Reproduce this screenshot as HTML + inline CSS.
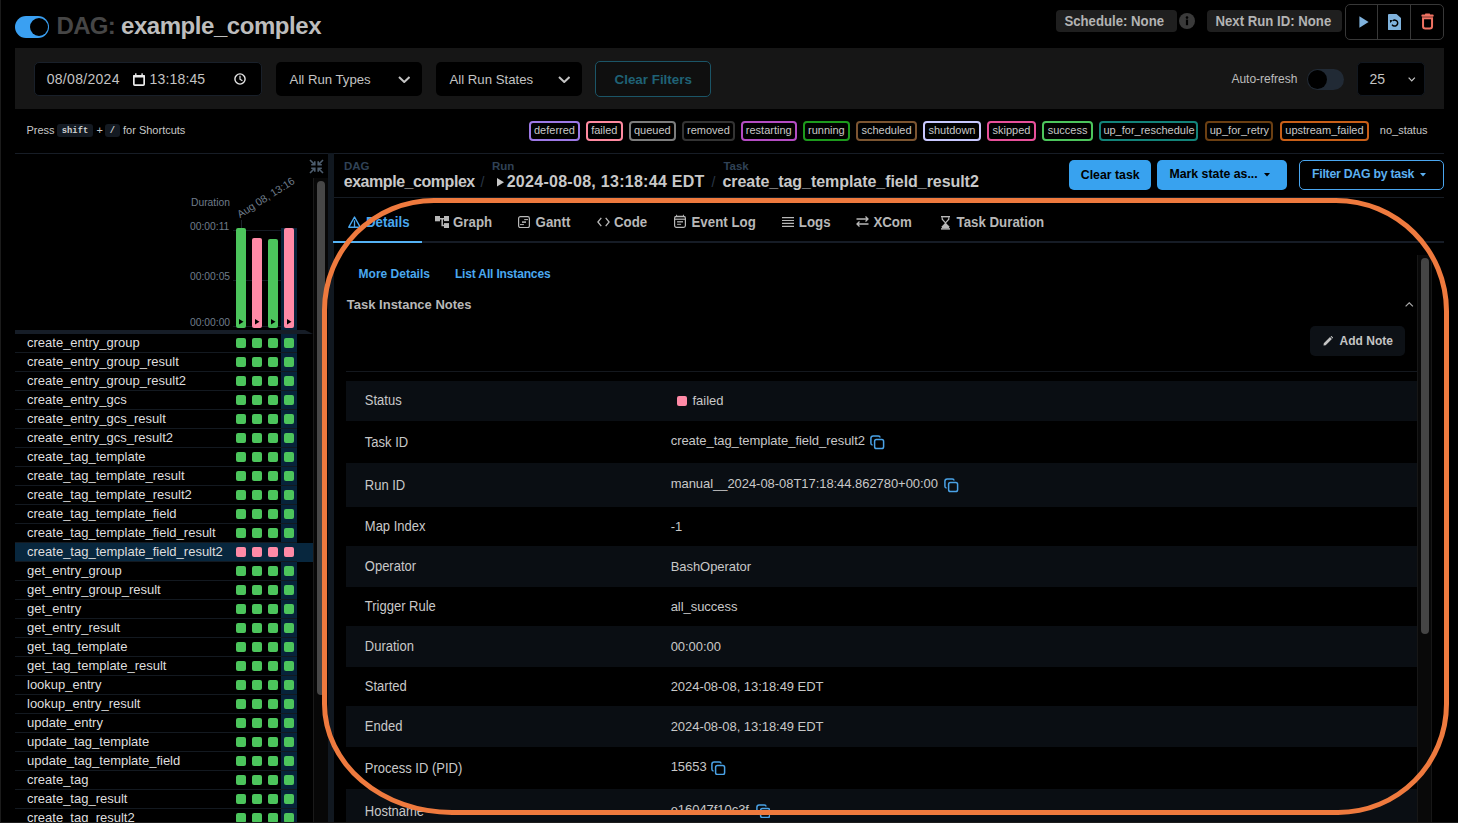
<!DOCTYPE html>
<html><head><meta charset="utf-8"><title>DAG: example_complex</title>
<style>
html,body{margin:0;padding:0;background:#000;width:1458px;height:823px;overflow:hidden;}
body{position:relative;font-family:"Liberation Sans", sans-serif;}
.t{position:absolute;white-space:nowrap;font-family:"Liberation Sans", sans-serif;}
.r{position:absolute;}
.badge{box-sizing:border-box;border:2px solid;border-radius:4px;font-size:11px;line-height:14.5px;color:#c8c8c8;text-align:center;white-space:nowrap;font-family:"Liberation Sans", sans-serif;}
</style></head><body>
<div class="r" style="left:0px;top:0px;width:1px;height:823px;background:#1b1b1b;"></div>
<div class="r" style="left:15px;top:16px;width:34px;height:22px;background:#3aa0f2;border-radius:11px;"></div>
<div class="r" style="left:29.8px;top:17.8px;width:18.4px;height:18.4px;background:#000;border-radius:50%;"></div>
<div class="t" style="left:56.5px;top:14.08px;font-size:24px;line-height:24px;color:#464646;font-weight:700;letter-spacing:-0.7px;">DAG:</div>
<div class="t" style="left:121px;top:14.08px;font-size:24px;line-height:24px;color:#bdbdbd;font-weight:700;letter-spacing:-0.45px;">example_complex</div>
<div class="r" style="left:1056px;top:10px;width:121px;height:21.5px;background:#1f1f1f;border-radius:4px;"></div>
<div class="t" style="left:1064.4px;top:15.13px;font-size:13.2px;line-height:13.2px;color:#b3b3b3;font-weight:700;letter-spacing:0px;transform-origin:0 11.17px;transform:scaleY(1.1);">Schedule: None</div>
<div class="r" style="left:1179px;top:13px;width:16px;height:16px;background:#3a3a3a;border-radius:50%;"></div>
<svg class="r" style="left:1179px;top:13px" width="16" height="16" viewBox="0 0 16 16"><circle cx="8" cy="4.6" r="1.3" fill="#000"/><rect x="6.9" y="6.6" width="2.2" height="5.6" fill="#000"/></svg>
<div class="r" style="left:1207px;top:10px;width:135px;height:21.5px;background:#1f1f1f;border-radius:4px;"></div>
<div class="t" style="left:1215.5px;top:15.13px;font-size:13.2px;line-height:13.2px;color:#b3b3b3;font-weight:700;letter-spacing:0px;transform-origin:0 11.17px;transform:scaleY(1.1);">Next Run ID: None</div>
<div class="r" style="left:1345px;top:4px;width:99px;height:35.5px;background:transparent;border:1px solid #383838;border-radius:5px;box-sizing:border-box;"></div>
<div class="r" style="left:1377px;top:4px;width:1px;height:35.5px;background:#383838;"></div>
<div class="r" style="left:1410px;top:4px;width:1px;height:35.5px;background:#383838;"></div>
<svg class="r" style="left:1358.5px;top:16px" width="11" height="12" viewBox="0 0 11 12"><path d="M0.4 0.2 L9.6 6 L0.4 11.8 Z" fill="#7fb2dc"/></svg>
<svg class="r" style="left:1387.9px;top:13.7px" width="13.2" height="16.4" viewBox="0 0 13.2 16.4"><path d="M1 0 H8.5 L13.1 4.2 V15.3 Q13.1 16.3 12.1 16.3 H1 Q0 16.3 0 15.3 V1 Q0 0 1 0 Z" fill="#7fb2dc"/><path d="M4.98 6.64 A3 3 0 1 1 4.1 10.6" fill="none" stroke="#000" stroke-width="1.5"/><path d="M1.9 6.1 L5.0 6.3 L2.2 9.0 Z" fill="#000"/></svg>
<svg class="r" style="left:1421px;top:12.8px" width="13" height="17" viewBox="0 0 13 17"><rect x="0.4" y="1.6" width="12.3" height="2.1" rx="1" fill="#f07262"/><rect x="4" y="0.6" width="5.1" height="1.8" rx="0.7" fill="#f07262"/><path d="M2.05 5.35 H11.05 V13.2 Q11.05 15.5 8.8 15.5 H4.3 Q2.05 15.5 2.05 13.2 Z" fill="none" stroke="#f07262" stroke-width="2"/></svg>
<div class="r" style="left:15px;top:48px;width:1429px;height:61px;background:#161616;"></div>
<div class="r" style="left:34px;top:62px;width:228px;height:34px;background:#000;border:1px solid #19202a;border-radius:5px;box-sizing:border-box;"></div>
<div class="t" style="left:46.7px;top:72.35px;font-size:14px;line-height:14px;color:#c4c4c4;font-weight:400;letter-spacing:0.3px;">08/08/2024</div>
<svg class="r" style="left:133px;top:73px" width="12" height="13" viewBox="0 0 12 13"><rect x="0.85" y="2.85" width="10.3" height="9.3" rx="0.9" fill="none" stroke="#ececec" stroke-width="1.7"/><rect x="0.1" y="2.1" width="11.8" height="2.3" rx="0.5" fill="#ececec"/><rect x="2.1" y="0.3" width="1.4" height="2.2" fill="#ececec"/><rect x="8.4" y="0.3" width="1.4" height="2.2" fill="#ececec"/></svg>
<div class="t" style="left:149.6px;top:72.35px;font-size:14px;line-height:14px;color:#c4c4c4;font-weight:400;letter-spacing:0.15px;">13:18:45</div>
<svg class="r" style="left:234px;top:73px" width="12" height="12" viewBox="0 0 12 12"><circle cx="6" cy="6" r="5.1" fill="none" stroke="#e6e6e6" stroke-width="1.4"/><path d="M6 2.8 V6.2 L8.4 7.8" fill="none" stroke="#e6e6e6" stroke-width="1.2"/></svg>
<div class="r" style="left:276px;top:62px;width:146px;height:34px;background:#000;border-radius:5px;"></div>
<div class="t" style="left:289.6px;top:72.83px;font-size:13.2px;line-height:13.2px;color:#c4c4c4;font-weight:400;letter-spacing:0px;">All Run Types</div>
<svg class="r" style="left:397.5px;top:75.5px" width="12.5" height="7" viewBox="0 0 12.5 7"><path d="M1.0 1.0 L6.25 6.0 L11.5 1.0" fill="none" stroke="#c4c4c4" stroke-width="2"/></svg>
<div class="r" style="left:436px;top:62px;width:146px;height:34px;background:#000;border-radius:5px;"></div>
<div class="t" style="left:449.5px;top:72.83px;font-size:13.2px;line-height:13.2px;color:#c4c4c4;font-weight:400;letter-spacing:0px;">All Run States</div>
<svg class="r" style="left:557.7px;top:75.5px" width="12.5" height="7" viewBox="0 0 12.5 7"><path d="M1.0 1.0 L6.25 6.0 L11.5 1.0" fill="none" stroke="#c4c4c4" stroke-width="2"/></svg>
<div class="r" style="left:595px;top:61px;width:116px;height:36px;background:#0f0f0f;border:1px solid #1b5567;border-radius:5px;box-sizing:border-box;"></div>
<div class="t" style="left:614.5px;top:72.96px;font-size:13.4px;line-height:13.4px;color:#1f6276;font-weight:700;letter-spacing:0px;">Clear Filters</div>
<div class="t" style="left:1231.4px;top:72.94px;font-size:12px;line-height:12px;color:#bdbdbd;font-weight:400;letter-spacing:0px;">Auto-refresh</div>
<div class="r" style="left:1307px;top:69px;width:37px;height:21px;background:#212a35;border-radius:10.5px;"></div>
<div class="r" style="left:1308px;top:70px;width:19px;height:19px;background:#000;border-radius:50%;"></div>
<div class="r" style="left:1357px;top:62px;width:68px;height:34px;background:#000;border:1px solid #121820;border-radius:5px;box-sizing:border-box;"></div>
<div class="t" style="left:1369.5px;top:72.35px;font-size:14px;line-height:14px;color:#c4c4c4;font-weight:400;letter-spacing:0px;">25</div>
<svg class="r" style="left:1408px;top:77px" width="7.5" height="4.5" viewBox="0 0 7.5 4.5"><path d="M0.65 0.65 L3.75 3.85 L6.85 0.65" fill="none" stroke="#c4c4c4" stroke-width="1.3"/></svg>
<div class="t" style="left:26.4px;top:124.69px;font-size:11px;line-height:11px;color:#c8c8c8;font-weight:400;letter-spacing:0px;">Press</div>
<div class="r" style="left:57.3px;top:124.2px;width:35.3px;height:13.3px;background:#141a22;border-radius:3px;"></div>
<div class="t" style="left:61.8px;top:126.75px;font-size:8.8px;line-height:8.8px;color:#d0d0d0;font-weight:700;letter-spacing:0px;font-family:'Liberation Mono',monospace;">shift</div>
<div class="t" style="left:96.5px;top:124.69px;font-size:11px;line-height:11px;color:#c8c8c8;font-weight:400;letter-spacing:0px;">+</div>
<div class="r" style="left:105px;top:124.2px;width:14.7px;height:13.3px;background:#141a22;border-radius:3px;"></div>
<div class="t" style="left:109.7px;top:126.75px;font-size:8.8px;line-height:8.8px;color:#d0d0d0;font-weight:700;letter-spacing:0px;font-family:'Liberation Mono',monospace;">/</div>
<div class="t" style="left:123px;top:124.69px;font-size:11px;line-height:11px;color:#c8c8c8;font-weight:400;letter-spacing:0px;">for Shortcuts</div>
<div class="r badge" style="left:529px;top:121px;width:51.0px;height:20px;border-color:#9d79e6;">deferred</div>
<div class="r badge" style="left:586px;top:121px;width:36.7px;height:20px;border-color:#ff8aa0;">failed</div>
<div class="r badge" style="left:628.9px;top:121px;width:46.9px;height:20px;border-color:#7c7c7c;">queued</div>
<div class="r badge" style="left:682.2px;top:121px;width:52.4px;height:20px;border-color:#333;">removed</div>
<div class="r badge" style="left:741px;top:121px;width:55.5px;height:20px;border-color:#b44cc2;">restarting</div>
<div class="r badge" style="left:803.2px;top:121px;width:46.4px;height:20px;border-color:#1d9a1d;">running</div>
<div class="r badge" style="left:856.2px;top:121px;width:60.7px;height:20px;border-color:#7c5531;">scheduled</div>
<div class="r badge" style="left:923px;top:121px;width:57.9px;height:20px;border-color:#c8c8ff;">shutdown</div>
<div class="r badge" style="left:987.2px;top:121px;width:48.6px;height:20px;border-color:#e8509a;">skipped</div>
<div class="r badge" style="left:1042.4px;top:121px;width:50.4px;height:20px;border-color:#4cc55c;">success</div>
<div class="r badge" style="left:1099.4px;top:121px;width:99.1px;height:20px;border-color:#138379;">up_for_reschedule</div>
<div class="r badge" style="left:1205.3px;top:121px;width:68.2px;height:20px;border-color:#6b3f12;">up_for_retry</div>
<div class="r badge" style="left:1280.3px;top:121px;width:88.3px;height:20px;border-color:#c95f18;">upstream_failed</div>
<div class="t" style="left:1379.8px;top:124.69px;font-size:11px;line-height:11px;color:#c8c8c8;font-weight:400;letter-spacing:0px;">no_status</div>
<div class="r" style="left:15px;top:153px;width:1429px;height:1px;background:#171d26;"></div>
<svg class="r" style="left:309px;top:159px" width="15" height="15" viewBox="0 0 15 15"><g fill="none" stroke="#4d5d6e" stroke-width="1.6"><path d="M1 1 L5.6 5.6 M5.8 2.2 V5.8 H2.2"/><path d="M14 1 L9.4 5.6 M9.2 2.2 V5.8 H12.8"/><path d="M1 14 L5.6 9.4 M5.8 12.8 V9.2 H2.2"/><path d="M14 14 L9.4 9.4 M9.2 12.8 V9.2 H12.8"/></g></svg>
<div class="r" style="left:313px;top:178px;width:14.6px;height:645px;background:#070707;border-left:1px solid #1a1a1a;box-sizing:border-box;"></div>
<div class="r" style="left:317px;top:181px;width:8px;height:514px;background:#474747;border-radius:4px;"></div>
<div class="r" style="left:327.5px;top:153px;width:6.5px;height:670px;background:#111820;"></div>
<div class="t" style="left:191px;top:198.28px;font-size:10.3px;line-height:10.3px;color:#6f7c8a;font-weight:400;letter-spacing:0px;">Duration</div>
<div class="t" style="left:190px;top:222.38px;font-size:10.3px;line-height:10.3px;color:#6f7c8a;font-weight:400;letter-spacing:0px;">00:00:11</div>
<div class="t" style="left:190px;top:272.48px;font-size:10.3px;line-height:10.3px;color:#6f7c8a;font-weight:400;letter-spacing:0px;">00:00:05</div>
<div class="t" style="left:190px;top:318.18px;font-size:10.3px;line-height:10.3px;color:#6f7c8a;font-weight:400;letter-spacing:0px;">00:00:00</div>
<div class="r" style="left:233px;top:229.5px;width:64px;height:1px;background:#151b23;"></div>
<div class="r" style="left:233px;top:279.5px;width:64px;height:1px;background:#151b23;"></div>
<div class="r" style="left:233px;top:325.5px;width:64px;height:1px;background:#151b23;"></div>
<div class="r" style="left:241px;top:220px;width:1px;height:8px;background:#1c232c;"></div>
<div class="t" style="left:240.5px;top:208.5px;font-size:10.6px;line-height:11px;color:#6f7c8a;transform-origin:0 100%;transform:rotate(-32.5deg);">Aug 08, 13:16</div>
<div class="r" style="left:281px;top:227.8px;width:16px;height:600px;background:#07233a;"></div>
<div class="r" style="left:236px;top:228.2px;width:10px;height:99.69999999999999px;background:#4cc55c;border-radius:2px;"></div>
<svg class="r" style="left:239.2px;top:319.3px" width="4.5" height="5.5" viewBox="0 0 4.5 5.5"><path d="M0 0 L4.5 2.75 L0 5.5 Z" fill="#000"/></svg>
<div class="r" style="left:252px;top:237.8px;width:10px;height:90.09999999999997px;background:#ff8aa6;border-radius:2px;"></div>
<svg class="r" style="left:255.2px;top:319.3px" width="4.5" height="5.5" viewBox="0 0 4.5 5.5"><path d="M0 0 L4.5 2.75 L0 5.5 Z" fill="#000"/></svg>
<div class="r" style="left:268px;top:239.2px;width:10px;height:88.69999999999999px;background:#4cc55c;border-radius:2px;"></div>
<svg class="r" style="left:271.2px;top:319.3px" width="4.5" height="5.5" viewBox="0 0 4.5 5.5"><path d="M0 0 L4.5 2.75 L0 5.5 Z" fill="#000"/></svg>
<div class="r" style="left:284px;top:228.2px;width:10px;height:99.69999999999999px;background:#ff8aa6;border-radius:2px;"></div>
<svg class="r" style="left:287.2px;top:319.3px" width="4.5" height="5.5" viewBox="0 0 4.5 5.5"><path d="M0 0 L4.5 2.75 L0 5.5 Z" fill="#000"/></svg>
<div class="r" style="left:15px;top:330px;width:290px;height:4px;background:#161d27;"></div>
<svg class="r" style="left:305px;top:330px" width="8" height="4" viewBox="0 0 8 4"><path d="M0 0 L0 4 L8 4 Z" fill="#161d27"/></svg>
<div class="r" style="left:15px;top:352.3px;width:282px;height:1px;background:#131920;"></div>
<div class="t" style="left:27px;top:335.70px;font-size:13px;line-height:13px;color:#dedede;font-weight:400;letter-spacing:0px;">create_entry_group</div>
<div class="r" style="left:236px;top:338px;width:10px;height:10px;background:#4cc55c;border-radius:2px;"></div>
<div class="r" style="left:252px;top:338px;width:10px;height:10px;background:#4cc55c;border-radius:2px;"></div>
<div class="r" style="left:268px;top:338px;width:10px;height:10px;background:#4cc55c;border-radius:2px;"></div>
<div class="r" style="left:284px;top:338px;width:10px;height:10px;background:#4cc55c;border-radius:2px;"></div>
<div class="r" style="left:15px;top:371.3px;width:282px;height:1px;background:#131920;"></div>
<div class="t" style="left:27px;top:354.70px;font-size:13px;line-height:13px;color:#dedede;font-weight:400;letter-spacing:0px;">create_entry_group_result</div>
<div class="r" style="left:236px;top:357px;width:10px;height:10px;background:#4cc55c;border-radius:2px;"></div>
<div class="r" style="left:252px;top:357px;width:10px;height:10px;background:#4cc55c;border-radius:2px;"></div>
<div class="r" style="left:268px;top:357px;width:10px;height:10px;background:#4cc55c;border-radius:2px;"></div>
<div class="r" style="left:284px;top:357px;width:10px;height:10px;background:#4cc55c;border-radius:2px;"></div>
<div class="r" style="left:15px;top:390.3px;width:282px;height:1px;background:#131920;"></div>
<div class="t" style="left:27px;top:373.70px;font-size:13px;line-height:13px;color:#dedede;font-weight:400;letter-spacing:0px;">create_entry_group_result2</div>
<div class="r" style="left:236px;top:376px;width:10px;height:10px;background:#4cc55c;border-radius:2px;"></div>
<div class="r" style="left:252px;top:376px;width:10px;height:10px;background:#4cc55c;border-radius:2px;"></div>
<div class="r" style="left:268px;top:376px;width:10px;height:10px;background:#4cc55c;border-radius:2px;"></div>
<div class="r" style="left:284px;top:376px;width:10px;height:10px;background:#4cc55c;border-radius:2px;"></div>
<div class="r" style="left:15px;top:409.3px;width:282px;height:1px;background:#131920;"></div>
<div class="t" style="left:27px;top:392.70px;font-size:13px;line-height:13px;color:#dedede;font-weight:400;letter-spacing:0px;">create_entry_gcs</div>
<div class="r" style="left:236px;top:395px;width:10px;height:10px;background:#4cc55c;border-radius:2px;"></div>
<div class="r" style="left:252px;top:395px;width:10px;height:10px;background:#4cc55c;border-radius:2px;"></div>
<div class="r" style="left:268px;top:395px;width:10px;height:10px;background:#4cc55c;border-radius:2px;"></div>
<div class="r" style="left:284px;top:395px;width:10px;height:10px;background:#4cc55c;border-radius:2px;"></div>
<div class="r" style="left:15px;top:428.3px;width:282px;height:1px;background:#131920;"></div>
<div class="t" style="left:27px;top:411.70px;font-size:13px;line-height:13px;color:#dedede;font-weight:400;letter-spacing:0px;">create_entry_gcs_result</div>
<div class="r" style="left:236px;top:414px;width:10px;height:10px;background:#4cc55c;border-radius:2px;"></div>
<div class="r" style="left:252px;top:414px;width:10px;height:10px;background:#4cc55c;border-radius:2px;"></div>
<div class="r" style="left:268px;top:414px;width:10px;height:10px;background:#4cc55c;border-radius:2px;"></div>
<div class="r" style="left:284px;top:414px;width:10px;height:10px;background:#4cc55c;border-radius:2px;"></div>
<div class="r" style="left:15px;top:447.3px;width:282px;height:1px;background:#131920;"></div>
<div class="t" style="left:27px;top:430.70px;font-size:13px;line-height:13px;color:#dedede;font-weight:400;letter-spacing:0px;">create_entry_gcs_result2</div>
<div class="r" style="left:236px;top:433px;width:10px;height:10px;background:#4cc55c;border-radius:2px;"></div>
<div class="r" style="left:252px;top:433px;width:10px;height:10px;background:#4cc55c;border-radius:2px;"></div>
<div class="r" style="left:268px;top:433px;width:10px;height:10px;background:#4cc55c;border-radius:2px;"></div>
<div class="r" style="left:284px;top:433px;width:10px;height:10px;background:#4cc55c;border-radius:2px;"></div>
<div class="r" style="left:15px;top:466.3px;width:282px;height:1px;background:#131920;"></div>
<div class="t" style="left:27px;top:449.70px;font-size:13px;line-height:13px;color:#dedede;font-weight:400;letter-spacing:0px;">create_tag_template</div>
<div class="r" style="left:236px;top:452px;width:10px;height:10px;background:#4cc55c;border-radius:2px;"></div>
<div class="r" style="left:252px;top:452px;width:10px;height:10px;background:#4cc55c;border-radius:2px;"></div>
<div class="r" style="left:268px;top:452px;width:10px;height:10px;background:#4cc55c;border-radius:2px;"></div>
<div class="r" style="left:284px;top:452px;width:10px;height:10px;background:#4cc55c;border-radius:2px;"></div>
<div class="r" style="left:15px;top:485.3px;width:282px;height:1px;background:#131920;"></div>
<div class="t" style="left:27px;top:468.70px;font-size:13px;line-height:13px;color:#dedede;font-weight:400;letter-spacing:0px;">create_tag_template_result</div>
<div class="r" style="left:236px;top:471px;width:10px;height:10px;background:#4cc55c;border-radius:2px;"></div>
<div class="r" style="left:252px;top:471px;width:10px;height:10px;background:#4cc55c;border-radius:2px;"></div>
<div class="r" style="left:268px;top:471px;width:10px;height:10px;background:#4cc55c;border-radius:2px;"></div>
<div class="r" style="left:284px;top:471px;width:10px;height:10px;background:#4cc55c;border-radius:2px;"></div>
<div class="r" style="left:15px;top:504.3px;width:282px;height:1px;background:#131920;"></div>
<div class="t" style="left:27px;top:487.70px;font-size:13px;line-height:13px;color:#dedede;font-weight:400;letter-spacing:0px;">create_tag_template_result2</div>
<div class="r" style="left:236px;top:490px;width:10px;height:10px;background:#4cc55c;border-radius:2px;"></div>
<div class="r" style="left:252px;top:490px;width:10px;height:10px;background:#4cc55c;border-radius:2px;"></div>
<div class="r" style="left:268px;top:490px;width:10px;height:10px;background:#4cc55c;border-radius:2px;"></div>
<div class="r" style="left:284px;top:490px;width:10px;height:10px;background:#4cc55c;border-radius:2px;"></div>
<div class="r" style="left:15px;top:523.3px;width:282px;height:1px;background:#131920;"></div>
<div class="t" style="left:27px;top:506.70px;font-size:13px;line-height:13px;color:#dedede;font-weight:400;letter-spacing:0px;">create_tag_template_field</div>
<div class="r" style="left:236px;top:509px;width:10px;height:10px;background:#4cc55c;border-radius:2px;"></div>
<div class="r" style="left:252px;top:509px;width:10px;height:10px;background:#4cc55c;border-radius:2px;"></div>
<div class="r" style="left:268px;top:509px;width:10px;height:10px;background:#4cc55c;border-radius:2px;"></div>
<div class="r" style="left:284px;top:509px;width:10px;height:10px;background:#4cc55c;border-radius:2px;"></div>
<div class="r" style="left:15px;top:542.3px;width:282px;height:1px;background:#131920;"></div>
<div class="t" style="left:27px;top:525.70px;font-size:13px;line-height:13px;color:#dedede;font-weight:400;letter-spacing:0px;">create_tag_template_field_result</div>
<div class="r" style="left:236px;top:528px;width:10px;height:10px;background:#4cc55c;border-radius:2px;"></div>
<div class="r" style="left:252px;top:528px;width:10px;height:10px;background:#4cc55c;border-radius:2px;"></div>
<div class="r" style="left:268px;top:528px;width:10px;height:10px;background:#4cc55c;border-radius:2px;"></div>
<div class="r" style="left:284px;top:528px;width:10px;height:10px;background:#4cc55c;border-radius:2px;"></div>
<div class="r" style="left:15px;top:543.0px;width:298px;height:18.5px;background:#08273e;"></div>
<div class="r" style="left:15px;top:561.3px;width:282px;height:1px;background:#131920;"></div>
<div class="t" style="left:27px;top:544.70px;font-size:13px;line-height:13px;color:#dedede;font-weight:400;letter-spacing:0px;">create_tag_template_field_result2</div>
<div class="r" style="left:236px;top:547px;width:10px;height:10px;background:#ff8aa6;border-radius:2px;"></div>
<div class="r" style="left:252px;top:547px;width:10px;height:10px;background:#ff8aa6;border-radius:2px;"></div>
<div class="r" style="left:268px;top:547px;width:10px;height:10px;background:#ff8aa6;border-radius:2px;"></div>
<div class="r" style="left:284px;top:547px;width:10px;height:10px;background:#ff8aa6;border-radius:2px;"></div>
<div class="r" style="left:15px;top:580.3px;width:282px;height:1px;background:#131920;"></div>
<div class="t" style="left:27px;top:563.70px;font-size:13px;line-height:13px;color:#dedede;font-weight:400;letter-spacing:0px;">get_entry_group</div>
<div class="r" style="left:236px;top:566px;width:10px;height:10px;background:#4cc55c;border-radius:2px;"></div>
<div class="r" style="left:252px;top:566px;width:10px;height:10px;background:#4cc55c;border-radius:2px;"></div>
<div class="r" style="left:268px;top:566px;width:10px;height:10px;background:#4cc55c;border-radius:2px;"></div>
<div class="r" style="left:284px;top:566px;width:10px;height:10px;background:#4cc55c;border-radius:2px;"></div>
<div class="r" style="left:15px;top:599.3px;width:282px;height:1px;background:#131920;"></div>
<div class="t" style="left:27px;top:582.70px;font-size:13px;line-height:13px;color:#dedede;font-weight:400;letter-spacing:0px;">get_entry_group_result</div>
<div class="r" style="left:236px;top:585px;width:10px;height:10px;background:#4cc55c;border-radius:2px;"></div>
<div class="r" style="left:252px;top:585px;width:10px;height:10px;background:#4cc55c;border-radius:2px;"></div>
<div class="r" style="left:268px;top:585px;width:10px;height:10px;background:#4cc55c;border-radius:2px;"></div>
<div class="r" style="left:284px;top:585px;width:10px;height:10px;background:#4cc55c;border-radius:2px;"></div>
<div class="r" style="left:15px;top:618.3px;width:282px;height:1px;background:#131920;"></div>
<div class="t" style="left:27px;top:601.70px;font-size:13px;line-height:13px;color:#dedede;font-weight:400;letter-spacing:0px;">get_entry</div>
<div class="r" style="left:236px;top:604px;width:10px;height:10px;background:#4cc55c;border-radius:2px;"></div>
<div class="r" style="left:252px;top:604px;width:10px;height:10px;background:#4cc55c;border-radius:2px;"></div>
<div class="r" style="left:268px;top:604px;width:10px;height:10px;background:#4cc55c;border-radius:2px;"></div>
<div class="r" style="left:284px;top:604px;width:10px;height:10px;background:#4cc55c;border-radius:2px;"></div>
<div class="r" style="left:15px;top:637.3px;width:282px;height:1px;background:#131920;"></div>
<div class="t" style="left:27px;top:620.70px;font-size:13px;line-height:13px;color:#dedede;font-weight:400;letter-spacing:0px;">get_entry_result</div>
<div class="r" style="left:236px;top:623px;width:10px;height:10px;background:#4cc55c;border-radius:2px;"></div>
<div class="r" style="left:252px;top:623px;width:10px;height:10px;background:#4cc55c;border-radius:2px;"></div>
<div class="r" style="left:268px;top:623px;width:10px;height:10px;background:#4cc55c;border-radius:2px;"></div>
<div class="r" style="left:284px;top:623px;width:10px;height:10px;background:#4cc55c;border-radius:2px;"></div>
<div class="r" style="left:15px;top:656.3px;width:282px;height:1px;background:#131920;"></div>
<div class="t" style="left:27px;top:639.70px;font-size:13px;line-height:13px;color:#dedede;font-weight:400;letter-spacing:0px;">get_tag_template</div>
<div class="r" style="left:236px;top:642px;width:10px;height:10px;background:#4cc55c;border-radius:2px;"></div>
<div class="r" style="left:252px;top:642px;width:10px;height:10px;background:#4cc55c;border-radius:2px;"></div>
<div class="r" style="left:268px;top:642px;width:10px;height:10px;background:#4cc55c;border-radius:2px;"></div>
<div class="r" style="left:284px;top:642px;width:10px;height:10px;background:#4cc55c;border-radius:2px;"></div>
<div class="r" style="left:15px;top:675.3px;width:282px;height:1px;background:#131920;"></div>
<div class="t" style="left:27px;top:658.70px;font-size:13px;line-height:13px;color:#dedede;font-weight:400;letter-spacing:0px;">get_tag_template_result</div>
<div class="r" style="left:236px;top:661px;width:10px;height:10px;background:#4cc55c;border-radius:2px;"></div>
<div class="r" style="left:252px;top:661px;width:10px;height:10px;background:#4cc55c;border-radius:2px;"></div>
<div class="r" style="left:268px;top:661px;width:10px;height:10px;background:#4cc55c;border-radius:2px;"></div>
<div class="r" style="left:284px;top:661px;width:10px;height:10px;background:#4cc55c;border-radius:2px;"></div>
<div class="r" style="left:15px;top:694.3px;width:282px;height:1px;background:#131920;"></div>
<div class="t" style="left:27px;top:677.70px;font-size:13px;line-height:13px;color:#dedede;font-weight:400;letter-spacing:0px;">lookup_entry</div>
<div class="r" style="left:236px;top:680px;width:10px;height:10px;background:#4cc55c;border-radius:2px;"></div>
<div class="r" style="left:252px;top:680px;width:10px;height:10px;background:#4cc55c;border-radius:2px;"></div>
<div class="r" style="left:268px;top:680px;width:10px;height:10px;background:#4cc55c;border-radius:2px;"></div>
<div class="r" style="left:284px;top:680px;width:10px;height:10px;background:#4cc55c;border-radius:2px;"></div>
<div class="r" style="left:15px;top:713.3px;width:282px;height:1px;background:#131920;"></div>
<div class="t" style="left:27px;top:696.70px;font-size:13px;line-height:13px;color:#dedede;font-weight:400;letter-spacing:0px;">lookup_entry_result</div>
<div class="r" style="left:236px;top:699px;width:10px;height:10px;background:#4cc55c;border-radius:2px;"></div>
<div class="r" style="left:252px;top:699px;width:10px;height:10px;background:#4cc55c;border-radius:2px;"></div>
<div class="r" style="left:268px;top:699px;width:10px;height:10px;background:#4cc55c;border-radius:2px;"></div>
<div class="r" style="left:284px;top:699px;width:10px;height:10px;background:#4cc55c;border-radius:2px;"></div>
<div class="r" style="left:15px;top:732.3px;width:282px;height:1px;background:#131920;"></div>
<div class="t" style="left:27px;top:715.70px;font-size:13px;line-height:13px;color:#dedede;font-weight:400;letter-spacing:0px;">update_entry</div>
<div class="r" style="left:236px;top:718px;width:10px;height:10px;background:#4cc55c;border-radius:2px;"></div>
<div class="r" style="left:252px;top:718px;width:10px;height:10px;background:#4cc55c;border-radius:2px;"></div>
<div class="r" style="left:268px;top:718px;width:10px;height:10px;background:#4cc55c;border-radius:2px;"></div>
<div class="r" style="left:284px;top:718px;width:10px;height:10px;background:#4cc55c;border-radius:2px;"></div>
<div class="r" style="left:15px;top:751.3px;width:282px;height:1px;background:#131920;"></div>
<div class="t" style="left:27px;top:734.70px;font-size:13px;line-height:13px;color:#dedede;font-weight:400;letter-spacing:0px;">update_tag_template</div>
<div class="r" style="left:236px;top:737px;width:10px;height:10px;background:#4cc55c;border-radius:2px;"></div>
<div class="r" style="left:252px;top:737px;width:10px;height:10px;background:#4cc55c;border-radius:2px;"></div>
<div class="r" style="left:268px;top:737px;width:10px;height:10px;background:#4cc55c;border-radius:2px;"></div>
<div class="r" style="left:284px;top:737px;width:10px;height:10px;background:#4cc55c;border-radius:2px;"></div>
<div class="r" style="left:15px;top:770.3px;width:282px;height:1px;background:#131920;"></div>
<div class="t" style="left:27px;top:753.70px;font-size:13px;line-height:13px;color:#dedede;font-weight:400;letter-spacing:0px;">update_tag_template_field</div>
<div class="r" style="left:236px;top:756px;width:10px;height:10px;background:#4cc55c;border-radius:2px;"></div>
<div class="r" style="left:252px;top:756px;width:10px;height:10px;background:#4cc55c;border-radius:2px;"></div>
<div class="r" style="left:268px;top:756px;width:10px;height:10px;background:#4cc55c;border-radius:2px;"></div>
<div class="r" style="left:284px;top:756px;width:10px;height:10px;background:#4cc55c;border-radius:2px;"></div>
<div class="r" style="left:15px;top:789.3px;width:282px;height:1px;background:#131920;"></div>
<div class="t" style="left:27px;top:772.70px;font-size:13px;line-height:13px;color:#dedede;font-weight:400;letter-spacing:0px;">create_tag</div>
<div class="r" style="left:236px;top:775px;width:10px;height:10px;background:#4cc55c;border-radius:2px;"></div>
<div class="r" style="left:252px;top:775px;width:10px;height:10px;background:#4cc55c;border-radius:2px;"></div>
<div class="r" style="left:268px;top:775px;width:10px;height:10px;background:#4cc55c;border-radius:2px;"></div>
<div class="r" style="left:284px;top:775px;width:10px;height:10px;background:#4cc55c;border-radius:2px;"></div>
<div class="r" style="left:15px;top:808.3px;width:282px;height:1px;background:#131920;"></div>
<div class="t" style="left:27px;top:791.70px;font-size:13px;line-height:13px;color:#dedede;font-weight:400;letter-spacing:0px;">create_tag_result</div>
<div class="r" style="left:236px;top:794px;width:10px;height:10px;background:#4cc55c;border-radius:2px;"></div>
<div class="r" style="left:252px;top:794px;width:10px;height:10px;background:#4cc55c;border-radius:2px;"></div>
<div class="r" style="left:268px;top:794px;width:10px;height:10px;background:#4cc55c;border-radius:2px;"></div>
<div class="r" style="left:284px;top:794px;width:10px;height:10px;background:#4cc55c;border-radius:2px;"></div>
<div class="t" style="left:27px;top:810.70px;font-size:13px;line-height:13px;color:#dedede;font-weight:400;letter-spacing:0px;">create_tag_result2</div>
<div class="r" style="left:236px;top:813px;width:10px;height:10px;background:#4cc55c;border-radius:2px;"></div>
<div class="r" style="left:252px;top:813px;width:10px;height:10px;background:#4cc55c;border-radius:2px;"></div>
<div class="r" style="left:268px;top:813px;width:10px;height:10px;background:#4cc55c;border-radius:2px;"></div>
<div class="r" style="left:284px;top:813px;width:10px;height:10px;background:#4cc55c;border-radius:2px;"></div>
<div class="t" style="left:344px;top:161.17px;font-size:11.5px;line-height:11.5px;color:#304256;font-weight:700;letter-spacing:0px;">DAG</div>
<div class="t" style="left:343.7px;top:174.06px;font-size:16px;line-height:16px;color:#c8c8c8;font-weight:700;letter-spacing:-0.45px;">example_complex</div>
<div class="t" style="left:480.5px;top:174.65px;font-size:14px;line-height:14px;color:#293748;font-weight:400;letter-spacing:0px;">/</div>
<div class="t" style="left:492px;top:161.17px;font-size:11.5px;line-height:11.5px;color:#304256;font-weight:700;letter-spacing:0px;">Run</div>
<svg class="r" style="left:497px;top:178px" width="7" height="8.5" viewBox="0 0 7 8.5"><path d="M0 0 L7 4.25 L0 8.5 Z" fill="#c8c8c8"/></svg>
<div class="t" style="left:506.7px;top:173.86px;font-size:16px;line-height:16px;color:#c8c8c8;font-weight:700;letter-spacing:0.28px;">2024-08-08, 13:18:44 EDT</div>
<div class="t" style="left:711.5px;top:174.65px;font-size:14px;line-height:14px;color:#293748;font-weight:400;letter-spacing:0px;">/</div>
<div class="t" style="left:723.4px;top:161.17px;font-size:11.5px;line-height:11.5px;color:#304256;font-weight:700;letter-spacing:0px;">Task</div>
<div class="t" style="left:722.5px;top:173.86px;font-size:16px;line-height:16px;color:#c8c8c8;font-weight:700;letter-spacing:-0.05px;">create_tag_template_field_result2</div>
<div class="r" style="left:1069px;top:160.4px;width:81.7px;height:29.3px;background:#38a2ef;border-radius:5px;"></div>
<div class="t" style="left:1080.8px;top:169.09px;font-size:12.3px;line-height:12.3px;color:#000;font-weight:700;letter-spacing:0px;">Clear task</div>
<div class="r" style="left:1157.2px;top:160.4px;width:129.8px;height:29.3px;background:#38a2ef;border-radius:5px;"></div>
<div class="t" style="left:1169.5px;top:167.89px;font-size:12.3px;line-height:12.3px;color:#000;font-weight:700;letter-spacing:0px;">Mark state as...</div>
<svg class="r" style="left:1264px;top:173px" width="6" height="4" viewBox="0 0 6 4"><path d="M0 0 H6 L3 3.5 Z" fill="#000"/></svg>
<div class="r" style="left:1299px;top:160.4px;width:144.7px;height:29.3px;background:transparent;border:1px solid #4aa6ef;border-radius:5px;box-sizing:border-box;"></div>
<div class="t" style="left:1312px;top:167.89px;font-size:12.3px;line-height:12.3px;color:#5cb0f0;font-weight:700;letter-spacing:-0.25px;">Filter DAG by task</div>
<svg class="r" style="left:1420px;top:173px" width="6" height="4" viewBox="0 0 6 4"><path d="M0 0 H6 L3 3.5 Z" fill="#5cb0f0"/></svg>
<div class="r" style="left:334px;top:197px;width:1110px;height:1px;background:#161c24;"></div>
<div class="r" style="left:334px;top:241px;width:1110px;height:2px;background:#161c26;"></div>
<div class="r" style="left:333px;top:241px;width:89px;height:2px;background:#54b2f4;"></div>
<div class="t" style="left:366px;top:216.14px;font-size:13.3px;line-height:13.3px;color:#4aa8ef;font-weight:700;letter-spacing:0px;transform-origin:0 11.26px;transform:scaleY(1.1);">Details</div>
<svg class="r" style="left:347.5px;top:215.5px" width="13" height="12" viewBox="0 0 13 12"><path d="M6.5 1 L12.2 11.2 H0.8 Z" fill="none" stroke="#4aa8ef" stroke-width="1.4" stroke-linejoin="round"/><path d="M6.5 4.4 V11" stroke="#4aa8ef" stroke-width="1.3"/></svg>
<div class="t" style="left:453px;top:216.14px;font-size:13.3px;line-height:13.3px;color:#b8b8b8;font-weight:700;letter-spacing:0px;transform-origin:0 11.26px;transform:scaleY(1.1);">Graph</div>
<svg class="r" style="left:435px;top:215.9px" width="14" height="12.5" viewBox="0 0 14 12.5"><rect x="0" y="0" width="5" height="5.3" fill="#b8b8b8"/><rect x="9" y="0" width="5" height="5.1" fill="#b8b8b8"/><rect x="9" y="7.1" width="5" height="5.1" fill="#b8b8b8"/><path d="M5 2.7 H9 M7.2 2.7 V9.5 H9" fill="none" stroke="#b8b8b8" stroke-width="1.5"/></svg>
<div class="t" style="left:535.6px;top:216.14px;font-size:13.3px;line-height:13.3px;color:#b8b8b8;font-weight:700;letter-spacing:0px;transform-origin:0 11.26px;transform:scaleY(1.1);">Gantt</div>
<svg class="r" style="left:518px;top:215.9px" width="12" height="12.2" viewBox="0 0 12 12.2"><rect x="0.6" y="0.6" width="10.8" height="11" rx="1.8" fill="none" stroke="#b8b8b8" stroke-width="1.2"/><path d="M6.2 3.6 H10 M2 8.6 H5.9" stroke="#b8b8b8" stroke-width="1"/><path d="M4 6.1 H8" stroke="#b8b8b8" stroke-width="1.5"/></svg>
<div class="t" style="left:614px;top:216.14px;font-size:13.3px;line-height:13.3px;color:#b8b8b8;font-weight:700;letter-spacing:0px;transform-origin:0 11.26px;transform:scaleY(1.1);">Code</div>
<svg class="r" style="left:596.5px;top:216.5px" width="13" height="10" viewBox="0 0 13 10"><path d="M4.3 0.8 L0.9 5 L4.3 9.2 M8.7 0.8 L12.1 5 L8.7 9.2" fill="none" stroke="#b8b8b8" stroke-width="1.3"/></svg>
<div class="t" style="left:691.5px;top:216.14px;font-size:13.3px;line-height:13.3px;color:#b8b8b8;font-weight:700;letter-spacing:0px;transform-origin:0 11.26px;transform:scaleY(1.1);">Event Log</div>
<svg class="r" style="left:674px;top:214.3px" width="12" height="14" viewBox="0 0 12 14"><path d="M2.5 0.3 L3.5 2.5 H1.8 Z M9.5 0.3 L10.3 2.5 H8.6 Z" fill="#b8b8b8"/><rect x="1.2" y="3" width="9.6" height="2.2" fill="#2e2e2e"/><rect x="0.6" y="2.4" width="10.8" height="11" rx="1.8" fill="none" stroke="#b8b8b8" stroke-width="1.2"/><path d="M0.6 5.3 H11.4" stroke="#b8b8b8" stroke-width="1"/><path d="M3.1 7.8 H9" stroke="#b8b8b8" stroke-width="1.3"/><path d="M3.1 10.3 H7.1" stroke="#b8b8b8" stroke-width="1"/></svg>
<div class="t" style="left:798.8px;top:216.14px;font-size:13.3px;line-height:13.3px;color:#b8b8b8;font-weight:700;letter-spacing:0px;transform-origin:0 11.26px;transform:scaleY(1.1);">Logs</div>
<svg class="r" style="left:781.5px;top:217px" width="12" height="10" viewBox="0 0 12 10"><path d="M0 0.6 H12 M0 3.5 H12 M0 6.4 H12 M0 9.3 H12" stroke="#b8b8b8" stroke-width="1.2"/></svg>
<div class="t" style="left:873.4px;top:216.14px;font-size:13.3px;line-height:13.3px;color:#b8b8b8;font-weight:700;letter-spacing:0px;transform-origin:0 11.26px;transform:scaleY(1.1);">XCom</div>
<svg class="r" style="left:855.5px;top:216px" width="13" height="11" viewBox="0 0 13 11"><path d="M0.5 3 H12 M9.5 0.5 L12 3 L9.5 5.5 M12.5 8 H1 M3.5 5.5 L1 8 L3.5 10.5" fill="none" stroke="#b8b8b8" stroke-width="1.3"/></svg>
<div class="t" style="left:956.5px;top:216.14px;font-size:13.3px;line-height:13.3px;color:#b8b8b8;font-weight:700;letter-spacing:0px;transform-origin:0 11.26px;transform:scaleY(1.1);">Task Duration</div>
<svg class="r" style="left:940.5px;top:216.3px" width="9" height="13.6" viewBox="0 0 9 13.6"><rect x="0" y="0" width="9" height="1.4" fill="#b8b8b8"/><rect x="0" y="12.2" width="9" height="1.4" fill="#b8b8b8"/><path d="M1.2 1.3 V3.2 L4.5 6.8 L7.8 3.2 V1.3" fill="none" stroke="#b8b8b8" stroke-width="1.2"/><path d="M4.5 6.6 L0.9 10.3 V12.3 H8.1 V10.3 Z" fill="#b8b8b8"/></svg>
<div class="t" style="left:358.6px;top:267.84px;font-size:12px;line-height:12px;color:#4aa8ef;font-weight:700;letter-spacing:0px;">More Details</div>
<div class="t" style="left:454.9px;top:267.84px;font-size:12px;line-height:12px;color:#4aa8ef;font-weight:700;letter-spacing:-0.15px;">List All Instances</div>
<div class="t" style="left:346.8px;top:298.40px;font-size:13px;line-height:13px;color:#b8b8b8;font-weight:700;letter-spacing:0px;">Task Instance Notes</div>
<svg class="r" style="left:1405px;top:302px" width="8.5" height="5" viewBox="0 0 8.5 5"><path d="M0.6 4.4 L4.25 0.8 L7.9 4.4" fill="none" stroke="#a8a8a8" stroke-width="1.2"/></svg>
<div class="r" style="left:1310px;top:326.3px;width:94.8px;height:29.3px;background:#0d1116;border-radius:5px;"></div>
<svg class="r" style="left:1323px;top:336px" width="10" height="10" viewBox="0 0 10 10"><path d="M0.5 9.5 L0.8 7.3 L7 1.1 L8.9 3 L2.7 9.2 Z M7.6 0.5 L8.3 -0.2 L10.2 1.7 L9.5 2.4 Z" fill="#c4c4c4"/></svg>
<div class="t" style="left:1339.6px;top:334.84px;font-size:12px;line-height:12px;color:#c4c4c4;font-weight:700;letter-spacing:0px;">Add Note</div>
<div class="r" style="left:346px;top:371px;width:1071px;height:1px;background:#14181e;"></div>
<div class="r" style="left:346px;top:381px;width:1071px;height:40px;background:#0a0e13;"></div>
<div class="t" style="left:364.8px;top:394.00px;font-size:13px;line-height:13px;color:#c8c8c8;font-weight:400;letter-spacing:0px;transform-origin:0 11.00px;transform:scaleY(1.1);">Status</div>
<div class="r" style="left:677px;top:396.3px;width:10px;height:9.7px;background:#ff8aa6;border-radius:2px;"></div>
<div class="t" style="left:692.5px;top:394.00px;font-size:13px;line-height:13px;color:#c8c8c8;font-weight:400;letter-spacing:0px;transform-origin:0 11.00px;transform:scaleY(1.05);">failed</div>
<div class="t" style="left:364.8px;top:435.80px;font-size:13px;line-height:13px;color:#c8c8c8;font-weight:400;letter-spacing:0px;transform-origin:0 11.00px;transform:scaleY(1.1);">Task ID</div>
<div class="t" style="left:670.7px;top:433.80px;font-size:13px;line-height:13px;color:#c8c8c8;font-weight:400;letter-spacing:-0.05px;transform-origin:0 11.00px;transform:scaleY(1.05);">create_tag_template_field_result2</div>
<div class="r" style="left:346px;top:463.3px;width:1071px;height:43.69999999999999px;background:#0a0e13;"></div>
<div class="t" style="left:364.8px;top:478.80px;font-size:13px;line-height:13px;color:#c8c8c8;font-weight:400;letter-spacing:0px;transform-origin:0 11.00px;transform:scaleY(1.1);">Run ID</div>
<div class="t" style="left:670.7px;top:476.80px;font-size:13px;line-height:13px;color:#c8c8c8;font-weight:400;letter-spacing:-0.05px;transform-origin:0 11.00px;transform:scaleY(1.05);">manual__2024-08-08T17:18:44.862780+00:00</div>
<div class="t" style="left:364.8px;top:519.70px;font-size:13px;line-height:13px;color:#c8c8c8;font-weight:400;letter-spacing:0px;transform-origin:0 11.00px;transform:scaleY(1.1);">Map Index</div>
<div class="t" style="left:670.7px;top:519.70px;font-size:13px;line-height:13px;color:#c8c8c8;font-weight:400;letter-spacing:-0.05px;transform-origin:0 11.00px;transform:scaleY(1.05);">-1</div>
<div class="r" style="left:346px;top:545.5px;width:1071px;height:41.10000000000002px;background:#0a0e13;"></div>
<div class="t" style="left:364.8px;top:560.00px;font-size:13px;line-height:13px;color:#c8c8c8;font-weight:400;letter-spacing:0px;transform-origin:0 11.00px;transform:scaleY(1.1);">Operator</div>
<div class="t" style="left:670.7px;top:560.00px;font-size:13px;line-height:13px;color:#c8c8c8;font-weight:400;letter-spacing:-0.05px;transform-origin:0 11.00px;transform:scaleY(1.05);">BashOperator</div>
<div class="t" style="left:364.8px;top:599.90px;font-size:13px;line-height:13px;color:#c8c8c8;font-weight:400;letter-spacing:0px;transform-origin:0 11.00px;transform:scaleY(1.1);">Trigger Rule</div>
<div class="t" style="left:670.7px;top:599.90px;font-size:13px;line-height:13px;color:#c8c8c8;font-weight:400;letter-spacing:-0.05px;transform-origin:0 11.00px;transform:scaleY(1.05);">all_success</div>
<div class="r" style="left:346px;top:626px;width:1071px;height:41px;background:#0a0e13;"></div>
<div class="t" style="left:364.8px;top:639.80px;font-size:13px;line-height:13px;color:#c8c8c8;font-weight:400;letter-spacing:0px;transform-origin:0 11.00px;transform:scaleY(1.1);">Duration</div>
<div class="t" style="left:670.7px;top:639.80px;font-size:13px;line-height:13px;color:#c8c8c8;font-weight:400;letter-spacing:-0.05px;transform-origin:0 11.00px;transform:scaleY(1.05);">00:00:00</div>
<div class="t" style="left:364.8px;top:679.90px;font-size:13px;line-height:13px;color:#c8c8c8;font-weight:400;letter-spacing:0px;transform-origin:0 11.00px;transform:scaleY(1.1);">Started</div>
<div class="t" style="left:670.7px;top:679.90px;font-size:13px;line-height:13px;color:#c8c8c8;font-weight:400;letter-spacing:-0.05px;transform-origin:0 11.00px;transform:scaleY(1.05);">2024-08-08, 13:18:49 EDT</div>
<div class="r" style="left:346px;top:706px;width:1071px;height:41px;background:#0a0e13;"></div>
<div class="t" style="left:364.8px;top:719.80px;font-size:13px;line-height:13px;color:#c8c8c8;font-weight:400;letter-spacing:0px;transform-origin:0 11.00px;transform:scaleY(1.1);">Ended</div>
<div class="t" style="left:670.7px;top:719.80px;font-size:13px;line-height:13px;color:#c8c8c8;font-weight:400;letter-spacing:-0.05px;transform-origin:0 11.00px;transform:scaleY(1.05);">2024-08-08, 13:18:49 EDT</div>
<div class="t" style="left:364.8px;top:761.80px;font-size:13px;line-height:13px;color:#c8c8c8;font-weight:400;letter-spacing:0px;transform-origin:0 11.00px;transform:scaleY(1.1);">Process ID (PID)</div>
<div class="t" style="left:670.7px;top:759.90px;font-size:13px;line-height:13px;color:#c8c8c8;font-weight:400;letter-spacing:-0.05px;transform-origin:0 11.00px;transform:scaleY(1.05);">15653</div>
<div class="r" style="left:346px;top:789px;width:1071px;height:43px;background:#0a0e13;"></div>
<div class="t" style="left:364.8px;top:804.90px;font-size:13px;line-height:13px;color:#c8c8c8;font-weight:400;letter-spacing:0px;transform-origin:0 11.00px;transform:scaleY(1.1);">Hostname</div>
<div class="t" style="left:670.7px;top:802.80px;font-size:13px;line-height:13px;color:#c8c8c8;font-weight:400;letter-spacing:-0.05px;transform-origin:0 11.00px;transform:scaleY(1.05);">e16047f10c3f</div>
<svg class="r" style="left:870.3px;top:435.2px" width="14.5" height="14.5" viewBox="0 0 14.5 14.5"><path d="M10 2.6 V2.4 Q10 0.9 8.3 0.9 H3.2 Q0.9 0.9 0.9 3.2 V8.3 Q0.9 10 2.6 10" fill="none" stroke="#4aa2e6" stroke-width="1.5"/><rect x="4.6" y="4.6" width="9" height="9" rx="1.8" fill="none" stroke="#4aa2e6" stroke-width="1.5"/></svg>
<svg class="r" style="left:944.4px;top:478.3px" width="14.5" height="14.5" viewBox="0 0 14.5 14.5"><path d="M10 2.6 V2.4 Q10 0.9 8.3 0.9 H3.2 Q0.9 0.9 0.9 3.2 V8.3 Q0.9 10 2.6 10" fill="none" stroke="#4aa2e6" stroke-width="1.5"/><rect x="4.6" y="4.6" width="9" height="9" rx="1.8" fill="none" stroke="#4aa2e6" stroke-width="1.5"/></svg>
<svg class="r" style="left:711px;top:760.8px" width="14.5" height="14.5" viewBox="0 0 14.5 14.5"><path d="M10 2.6 V2.4 Q10 0.9 8.3 0.9 H3.2 Q0.9 0.9 0.9 3.2 V8.3 Q0.9 10 2.6 10" fill="none" stroke="#4aa2e6" stroke-width="1.5"/><rect x="4.6" y="4.6" width="9" height="9" rx="1.8" fill="none" stroke="#4aa2e6" stroke-width="1.5"/></svg>
<svg class="r" style="left:755.5px;top:803.5px" width="14.5" height="14.5" viewBox="0 0 14.5 14.5"><path d="M10 2.6 V2.4 Q10 0.9 8.3 0.9 H3.2 Q0.9 0.9 0.9 3.2 V8.3 Q0.9 10 2.6 10" fill="none" stroke="#4aa2e6" stroke-width="1.5"/><rect x="4.6" y="4.6" width="9" height="9" rx="1.8" fill="none" stroke="#4aa2e6" stroke-width="1.5"/></svg>
<div class="r" style="left:1417px;top:254.8px;width:14.6px;height:570px;background:#090909;border-left:1px solid #171717;border-right:1px solid #171717;box-sizing:border-box;"></div>
<div class="r" style="left:1421px;top:257.8px;width:8px;height:376px;background:#454545;border-radius:4px;"></div>
<div class="r" style="left:322px;top:198px;width:1127px;height:617px;border:5px solid #ef7a3e;border-radius:112px 113px 111px 130px / 112px 113px 111px 111px;box-sizing:border-box;"></div>
<div class="r" style="left:0px;top:822px;width:1458px;height:1px;background:#1d1d1d;"></div>
</body></html>
